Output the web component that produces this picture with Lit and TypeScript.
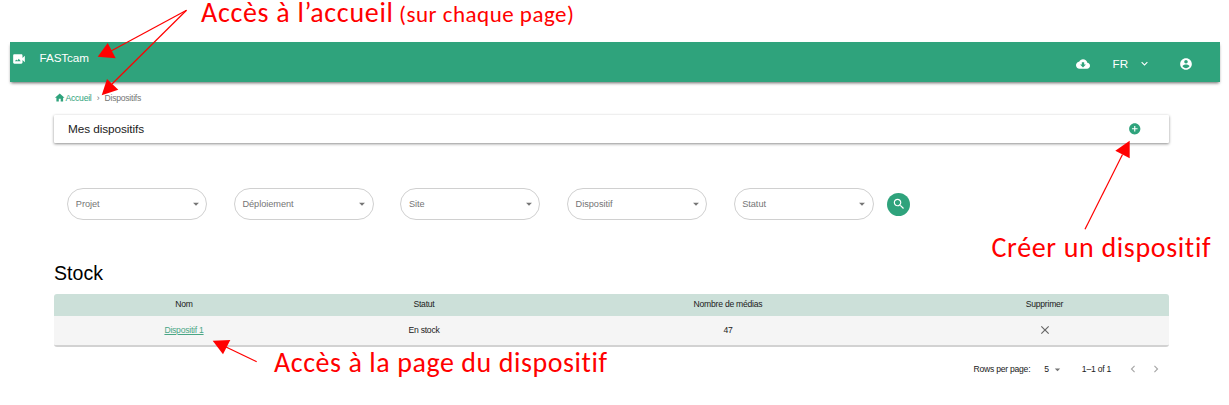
import { LitElement, html, css, svg } from "lit";
import { customElement } from "lit/decorators.js";

const FILTERS = ["Projet", "Déploiement", "Site", "Dispositif", "Statut"];

const ICONS: Record<string, string> = {
  video:
    "M18 10.48V6c0-1.1-.9-2-2-2H4c-1.1 0-2 .9-2 2v12c0 1.1.9 2 2 2h12c1.1 0 2-.9 2-2v-4.48l4 3.98v-11l-4 3.98zM5 16l2.380-3.170L9 15l2.620-3.500L15 16H5z",
  cloud:
    "M19.35 10.04C18.67 6.59 15.64 4 12 4 9.11 4 6.6 5.64 5.35 8.04 2.34 8.36 0 10.91 0 14c0 3.31 2.69 6 6 6h13c2.76 0 5-2.24 5-5 0-2.64-2.05-4.78-4.65-4.96zM17 13l-5 5-5-5h3V9h4v4h3z",
  chevron: "M7.41 8.59 12 13.17l4.59-4.58L18 10l-6 6-6-6 1.410-1.410z",
  user:
    "M12 2C6.480 2 2 6.480 2 12s4.480 10 10 10 10-4.480 10-10S17.520 2 12 2zm0 3c1.660 0 3 1.340 3 3s-1.340 3-3 3-3-1.340-3-3 1.340-3 3-3zm0 14.200c-2.500 0-4.710-1.280-6-3.220.03-1.990 4-3.080 6-3.080 1.990 0 5.970 1.090 6 3.080-1.290 1.940-3.500 3.220-6 3.220z",
  home: "M10 20v-6h4v6h5v-8h3L12 3 2 12h3v8z",
  add: "M12 2C6.480 2 2 6.480 2 12s4.480 10 10 10 10-4.480 10-10S17.520 2 12 2zm5 11h-4v4h-2v-4H7v-2h4V7h2v4h4v2z",
  drop: "M7 10l5 5 5-5z",
  search:
    "M15.5 14h-.79l-.28-.27C15.410 12.590 16 11.110 16 9.500 16 5.910 13.090 3 9.500 3S3 5.910 3 9.500 5.910 16 9.500 16c1.610 0 3.090-.59 4.230-1.570l.27.28v.79l5 4.990L20.490 19l-4.990-5zm-6 0C7.010 14 5 11.990 5 9.500S7.010 5 9.500 5 14 7.010 14 9.500 11.990 14 9.500 14z",
  close:
    "M19 6.410 17.590 5 12 10.590 6.410 5 5 6.410 10.590 12 5 17.590 6.410 19 12 13.410 17.590 19 19 17.590 13.410 12z",
  left: "M15.410 7.410 14 6l-6 6 6 6 1.410-1.410L10.830 12z",
  right: "M10 6 8.590 7.410 13.170 12l-4.580 4.590L10 18l6-6z",
};

const icon = (name: string, size: number) => html`<svg
  class="icon"
  width=${size}
  height=${size}
  viewBox="0 0 24 24"
>
  <path d=${ICONS[name]}></path>
</svg>`;

const arrow = (line: number[], head: string) => svg`
  <line x1=${line[0]} y1=${line[1]} x2=${line[2]} y2=${line[3]}></line>
  <polygon points=${head}></polygon>`;

@customElement("app-root")
export class AppRoot extends LitElement {
  static styles = css`
    :host {
      display: block;
      position: relative;
      width: 1229px;
      height: 405px;
      overflow: hidden;
      background: #fff;
      color: #212121;
      font: 8.600px/10px "Liberation Sans", Arial, sans-serif;
      letter-spacing: -0.240px;
    }
    * {
      box-sizing: border-box;
    }
    .icon {
      display: block;
      fill: currentColor;
      flex: none;
    }
    .page {
      padding: 42px 9px 0 10px;
    }
    header {
      display: flex;
      height: 40px;
      background: #2fa37c;
      color: #fff;
      box-shadow: 0 2px 3px -1px rgba(0, 0, 0, 0.600);
      padding: 0 27.500px 0 2px;
      font-size: 11.700px;
      line-height: 14px;
    }
    .logo {
      padding-top: 10px;
      width: 27.500px;
    }
    .brand {
      padding-top: 9px;
      flex: 1;
      letter-spacing: -0.080px;
    }
    .tools {
      display: flex;
      align-items: center;
      padding-top: 3px;
      letter-spacing: 0;
    }
    .lang {
      margin-left: 23px;
      width: 25px;
    }
    .user {
      margin-left: 28px;
    }
    main {
      padding: 10px 51px 0 44px;
    }
    .crumbs {
      display: flex;
      align-items: center;
      height: 11px;
      color: #757575;
    }
    .home {
      display: flex;
      align-items: center;
      color: #2fa37c;
    }
    .sep {
      width: 13px;
      text-align: center;
    }
    .card {
      display: flex;
      align-items: center;
      justify-content: space-between;
      height: 28px;
      margin-top: 12px;
      padding: 0 28px 0 14px;
      box-shadow: 0 1px 3px rgba(0, 0, 0, 0.450);
      border-radius: 1px;
      font-size: 11.800px;
      letter-spacing: -0.090px;
    }
    .add {
      color: #2fa37c;
      padding-bottom: 1px;
    }
    .filters {
      display: flex;
      align-items: center;
      gap: 26.600px;
      margin: 45px 0 0 13.300px;
    }
    .select {
      display: flex;
      align-items: center;
      justify-content: space-between;
      width: 140px;
      height: 32px;
      padding: 0 3.500px 0 7.500px;
      border: 1px solid #d0d0d0;
      border-radius: 16px;
      color: #757575;
      font-size: 9.200px;
      letter-spacing: -0.030px;
    }
    .search {
      display: grid;
      place-items: center;
      width: 23px;
      height: 23px;
      margin-left: -13px;
      border-radius: 50%;
      background: #2fa37c;
      color: #fff;
    }
    h2 {
      margin: 42px 0 0;
      font-size: 19.500px;
      line-height: 22px;
      font-weight: 400;
      letter-spacing: 0.050px;
      color: #000;
    }
    .table {
      margin-top: 10px;
      border-radius: 3px;
      overflow: hidden;
      border-bottom: 2px solid #d2d2d2;
    }
    .row {
      display: grid;
      grid-template-columns: 260px 220px 388px 245px;
      align-items: center;
      justify-items: center;
      height: 29px;
      background: #f5f5f5;
    }
    .head {
      height: 21.500px;
      padding-bottom: 1.500px;
      background: #cce0d9;
    }
    .link {
      color: #4aa685;
      text-decoration: underline;
    }
    .close {
      color: #666;
    }
    .pager {
      display: flex;
      align-items: center;
      justify-content: flex-end;
      margin-top: 15.500px;
      padding-right: 6px;
    }
    .size {
      display: flex;
      align-items: center;
      gap: 2px;
      margin: 0 18px 0 14px;
    }
    .drop {
      color: #757575;
    }
    .nav {
      display: flex;
      gap: 9px;
      margin-left: 15px;
      color: #a8a8a8;
    }
    .notes {
      position: absolute;
      inset: 0;
      fill: #f00;
      font-family: Carlito, Calibri, Lato, sans-serif;
      font-size: 28px;
      letter-spacing: 0;
      font-variant-ligatures: none;
    }
    .notes line {
      stroke: #f00;
      stroke-width: 1.200;
    }
    .small {
      font-size: 23px;
    }
  `;

  render() {
    return html`
      <div class="page">
        <header>
          <div class="logo">${icon("video", 14)}</div>
          <div class="brand">FASTcam</div>
          <div class="tools">
            ${icon("cloud", 14)}
            <span class="lang">FR</span>
            ${icon("chevron", 13)}
            <span class="user">${icon("user", 14)}</span>
          </div>
        </header>
        <main>
          <nav class="crumbs">
            <span class="home">${icon("home", 11.5)}Accueil</span>
            <span class="sep">›</span>
            <span>Dispositifs</span>
          </nav>
          <section class="card">
            <span>Mes dispositifs</span>
            <span class="add">${icon("add", 13.5)}</span>
          </section>
          <section class="filters">
            ${FILTERS.map(
              (f) => html`<div class="select"><span>${f}</span>${icon("drop", 14)}</div>`
            )}
            <div class="search">${icon("search", 14)}</div>
          </section>
          <h2>Stock</h2>
          <section class="table">
            <div class="row head">
              <span>Nom</span><span>Statut</span><span>Nombre de médias</span><span>Supprimer</span>
            </div>
            <div class="row">
              <span class="link">Dispositif 1</span><span>En stock</span><span>47</span>
              <span class="close">${icon("close", 14)}</span>
            </div>
          </section>
          <div class="pager">
            <span>Rows per page:</span>
            <span class="size">5 <span class="drop">${icon("drop", 13)}</span></span>
            <span>1–1 of 1</span>
            <span class="nav">${icon("left", 14)}${icon("right", 14)}</span>
          </div>
        </main>
      </div>
      <svg class="notes" width="1229" height="405" viewBox="0 0 1229 405">
        ${arrow([186.5, 10.3, 111, 51], "107.7,43 115.7,58.3 97.7,56.8")}
        ${arrow([186.5, 10.3, 112, 84], "107,79 118.3,89.7 101.7,95.3")}
        ${arrow([1085, 229.3, 1122.5, 154.5], "1129.7,140.7 1115.3,150.7 1129.7,158.3")}
        ${arrow([256.7, 361.7, 226, 347], "212.7,340.7 230.3,340 223,354.3")}
        <text x="201" y="21.500" textLength="192">Accès à l’accueil</text>
        <text class="small" x="399" y="21.500" textLength="175">(sur chaque page)</text>
        <text x="991.5" y="257" textLength="219">Créer un dispositif</text>
        <text x="274" y="372" textLength="333">Accès à la page du dispositif</text>
      </svg>
    `;
  }
}
